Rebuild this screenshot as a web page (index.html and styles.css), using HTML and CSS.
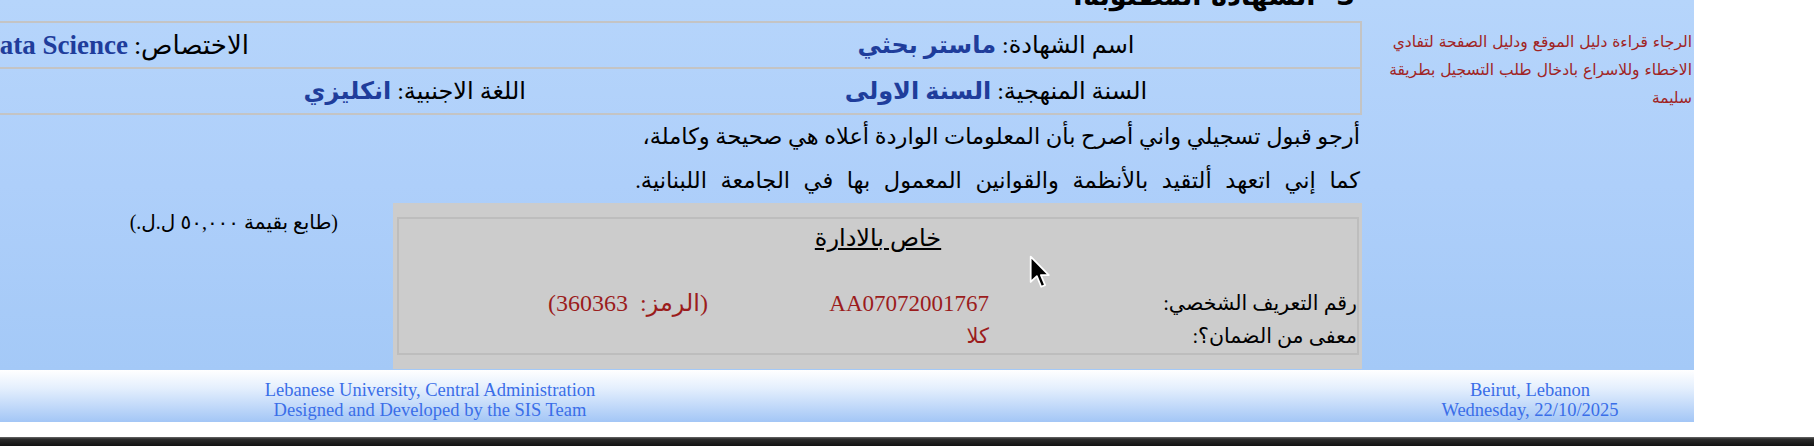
FILE: index.html
```html
<!DOCTYPE html>
<html lang="ar">
<head>
<meta charset="utf-8">
<title>طلب التسجيل</title>
<link rel="stylesheet" href="styles.css">
</head>
<body>
<div class="screen">
  <div class="page" dir="rtl">
    <div class="content">
      <aside class="note">الرجاء قراءة دليل الموقع ودليل الصفحة لتفادي الاخطاء وللاسراع بادخال طلب التسجيل بطريقة سليمة</aside>
      <main class="main">
        <div class="main-inner">
          <h2 class="section-title">3- الشهادة المطلوبة:</h2>
          <div class="info-table">
            <div class="info-row">
              <div class="cell-a">اسم الشهادة: <b class="val">ماستر بحثي</b></div>
              <div class="cell-b cell-b-1"><span class="wide-label">الاختصاص:</span> <b class="val val-latin">Data Science</b></div>
            </div>
            <div class="info-row">
              <div class="cell-a">السنة المنهجية: <b class="val">السنة الاولى</b></div>
              <div class="cell-b cell-b-2">اللغة الاجنبية: <b class="val">انكليزي</b></div>
            </div>
          </div>
          <p class="declaration">أرجو قبول تسجيلي واني أصرح بأن المعلومات الواردة أعلاه هي صحيحة وكاملة،<br><span class="decl-line2">كما إني اتعهد ألتقيد بالأنظمة والقوانين المعمول بها في الجامعة اللبنانية.</span></p>
          <div class="admin-row">
            <div class="admin-box">
              <div class="admin-inner">
                <div class="admin-title">خاص بالادارة</div>
                <div class="admin-field">
                  <div class="f-label">رقم التعريف الشخصي:</div>
                  <div class="f-value f-latin">AA07072001767</div>
                  <div class="f-extra">(الرمز: 360363)</div>
                </div>
                <div class="admin-field">
                  <div class="f-label">معفى من الضمان؟:</div>
                  <div class="f-value">كلا</div>
                </div>
              </div>
            </div>
            <div class="stamp">(طابع بقيمة ٥٠,٠٠٠ ل.ل.)</div>
          </div>
        </div>
      </main>
    </div>
    <footer class="footer">
      <div class="foot-left">Lebanese University, Central Administration<br>Designed and Developed by the SIS Team</div>
      <div class="foot-spacer"></div>
      <div class="foot-right">Beirut, Lebanon<br>Wednesday, 22/10/2025</div>
    </footer>
  </div>
  <div class="gap"></div>
  <div class="dock"></div>
  <svg class="cursor" viewBox="0 0 13.5 21" width="22" height="34" aria-hidden="true">
    <path d="M1 1 L1 16.6 L4.8 13.1 L7.5 19.6 L9.9 18.6 L7.3 12.4 L12.2 12.4 Z" fill="#000" stroke="#fff" stroke-width="1.1" stroke-linejoin="round"/>
  </svg>
</div>
</body>
</html>
```

FILE: styles.css
```css
* { box-sizing: border-box; }
html, body { margin: 0; padding: 0; background: #ffffff; }
body {
  width: 1814px;
  height: 446px;
  overflow: hidden;
  font-family: "Liberation Serif", "DejaVu Sans", serif;
  color: #000;
}
.screen {
  position: relative;
  width: 1814px;
  height: 446px;
  display: flex;
  flex-direction: column;
}
.page {
  width: 1694px;
  display: flex;
  flex-direction: column;
}
.content {
  height: 370px;
  display: flex;
  background: linear-gradient(to bottom, #b6d5fb 0%, #aecffa 50%, #a4c9f7 100%);
}
.note {
  flex: 0 0 330px;
  padding: 28px 2px 0 0;
  font-family: "DejaVu Sans", sans-serif;
  font-size: 15.5px;
  line-height: 28px;
  color: #a02424;
}
.main {
  flex: 1 1 auto;
  min-width: 0;
  overflow: hidden;
  padding-right: 2px;
}
.main-inner {
  width: 1762px;
}
.section-title {
  margin: -19px 0 10px;
  padding-right: 7px;
  font-family: "DejaVu Sans", sans-serif;
  font-size: 27px;
  font-weight: bold;
  line-height: 30px;
  white-space: nowrap;
}
.info-table {
  border: 2px solid #c4c4c4;
}
.info-row {
  display: flex;
  height: 44px;
  align-items: center;
  font-size: 24px;
  white-space: nowrap;
}
.info-row + .info-row {
  border-top: 2px solid #c4c4c4;
  height: 46px;
}
.cell-a {
  flex: 0 0 728px;
  text-align: center;
}
.cell-b {
  flex: 1 1 auto;
  text-align: right;
}
.cell-b-1 { padding-right: 383px; }
.cell-b-2 { padding-right: 106px; }
.wide-label { font-size: 26px; }
.val { color: #1f3d9b; font-weight: bold; }
.val-latin { font-size: 27px; }
.declaration {
  margin: 0;
  padding-right: 2px;
  font-size: 22.5px;
  line-height: 44px;
  white-space: nowrap;
}
.decl-line2 { word-spacing: 8px; }
.admin-row {
  display: flex;
}
.admin-box {
  flex: 0 0 969px;
  height: 166px;
  background: #cccccc;
  padding: 14px 3px 14px 4px;
}
.admin-inner {
  height: 138px;
  border: 2px solid #bdbdbd;
}
.admin-title {
  padding-top: 5px;
  margin-bottom: 35px;
  text-align: center;
  font-size: 24px;
  line-height: 28px;
  text-decoration: underline;
}
.admin-field {
  display: flex;
  height: 33px;
  line-height: 33px;
  white-space: nowrap;
}
.f-label {
  flex: 0 0 368px;
  font-size: 20.5px;
}
.f-value {
  flex: 0 0 281px;
  color: #9b1c1c;
  font-size: 21px;
}
.f-latin { font-size: 23px; }
.f-extra {
  flex: 0 0 auto;
  color: #9b1c1c;
  font-size: 24px;
  word-spacing: 6px;
}
.stamp {
  flex: 1 1 auto;
  padding: 7px 55px 0 0;
  font-size: 20px;
  line-height: 24px;
  white-space: nowrap;
}
.footer {
  height: 52px;
  display: flex;
  direction: ltr;
  padding-top: 10px;
  background: linear-gradient(to bottom, #ffffff 0%, #e4effd 35%, #a3c6f6 100%);
  color: #3a6ee8;
  font-size: 18.5px;
  line-height: 20px;
  text-align: center;
}
.foot-left { flex: 0 0 860px; }
.foot-spacer { flex: 1 1 auto; }
.foot-right { flex: 0 0 328px; }
.gap { height: 15px; }
.dock {
  height: 9px;
  background: linear-gradient(to bottom, #6b6b6b 0px, #2c2c2c 2px, #121212 100%);
}
.cursor {
  position: absolute;
  left: 1029px;
  top: 255px;
}
```
